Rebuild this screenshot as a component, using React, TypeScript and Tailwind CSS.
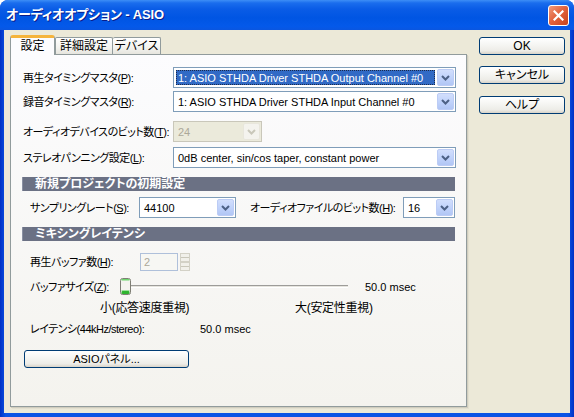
const font = "font-['Liberation_Sans','Noto_Sans_CJK_JP',sans-serif] [font-feature-settings:'palt']";

function Chevron({ disabled }: { disabled?: boolean }) {
  return (
    <svg width="9" height="6" viewBox="0 0 9 6">
      <path d="M1 1L4.5 4.5L8 1" fill="none" stroke={disabled ? "#C9C7BA" : "#4D6185"} strokeWidth="2" />
    </svg>
  );
}

function Combo({ value, w, selected, disabled }: { value: string; w: string; selected?: boolean; disabled?: boolean }) {
  return (
    <div
      className={`flex h-[21px] ${w} shrink-0 items-center border ${
        disabled ? "border-[#C9C7BA] bg-[#EBEADB] text-[#ACA899]" : "border-[#7F9DB9] bg-white text-black"
      }`}
    >
      <div className="flex h-full min-w-0 flex-1 items-center overflow-hidden p-[2px]">
        {selected ? (
          <div className="flex h-full flex-1 items-center border border-dotted border-[#1c2a4a] bg-[#316AC5] pl-[1px] text-white">
            {value}
          </div>
        ) : (
          <span className="pl-[2px]">{value}</span>
        )}
      </div>
      <div
        className={`mr-[1px] flex h-[17px] w-[17px] shrink-0 items-center justify-center rounded-[2px] border ${
          disabled
            ? "border-[#E8E6DC] bg-[#F4F3EE]"
            : "border-[#BCCCF5] bg-[linear-gradient(180deg,#D2DEFC_0%,#C1D3FB_50%,#B1C6F5_100%)]"
        }`}
      >
        <Chevron disabled={disabled} />
      </div>
    </div>
  );
}

function XpButton({ children, className }: { children: React.ReactNode; className?: string }) {
  return (
    <div
      className={`flex shrink-0 items-center justify-center rounded-[3px] border border-[#003C74] bg-[linear-gradient(180deg,#FFFFFF_0%,#F5F5F2_45%,#EDECE7_80%,#D8D3C8_100%)] text-black ${className ?? ""}`}
    >
      {children}
    </div>
  );
}

function SectionBar({ title, className }: { title: string; className?: string }) {
  return (
    <div className={`flex h-[14px] w-[433px] items-center border-l border-[#8A90A2] bg-[#6B7184] pl-[12px] text-[12px] font-bold text-white ${className ?? ""}`}>
      {title}
    </div>
  );
}

function Label({ children, className }: { children: React.ReactNode; className?: string }) {
  return <span className={`shrink-0 tracking-[-0.5px] ${className ?? ""}`}>{children}</span>;
}

function U({ k }: { k: string }) {
  return <span className="underline">{k}</span>;
}

export default function App() {
  return (
    <div className={`${font} flex h-[417px] w-[574px] flex-col overflow-hidden whitespace-nowrap rounded-t-[8px] bg-[#0A48DE] text-[11px] leading-[14px]`}>
      {/* title bar */}
      <div className="flex h-[30px] shrink-0 items-center justify-between bg-[linear-gradient(180deg,#3D8EF6_0%,#1A6DED_10%,#0A5CE6_30%,#0055E3_60%,#0459EA_88%,#0A56E0_100%)] pl-[6px] pr-[5px]">
        <span className="text-[13px] font-bold tracking-[-0.2px] text-white [text-shadow:1px_1px_#0A1C8A]">オーディオオプション - ASIO</span>
        <div className="flex h-[21px] w-[21px] items-center justify-center rounded-[3px] border border-white bg-[linear-gradient(135deg,#F09A7C_0%,#E2643F_45%,#C7421B_100%)]">
          <svg width="11" height="11" viewBox="0 0 11 11">
            <path d="M1.5 1.5L9.5 9.5M9.5 1.5L1.5 9.5" stroke="white" strokeWidth="2.2" strokeLinecap="square" />
          </svg>
        </div>
      </div>

      {/* frame + client */}
      <div className="flex flex-1 bg-[linear-gradient(90deg,#0031C4_0%,#0A53E5_1%,#0A53E5_99%,#0031C4_100%)] px-[4px] pb-[4px]">
        <div className="flex flex-1 bg-[#ECE9D8] pl-[6px] pt-[5px]">
          {/* tab control */}
          <div className="flex w-[457px] flex-col">
            <div className="flex h-[19px] items-end text-[12px]">
              <div className="relative z-10 -mb-[1px] flex h-[20px] w-[45px] items-center justify-center rounded-t-[3px] border-x border-t-[3px] border-x-[#919B9C] border-t-[#F5B43C] bg-[#FCFCFE] pb-[1px] text-black">
                設定
              </div>
              <div className="flex h-[17px] w-[58px] items-center justify-center rounded-t-[2px] border border-b-0 border-[#919B9C] bg-[linear-gradient(180deg,#FFFFFF_0%,#F3F3EF_60%,#E6E5DE_100%)] text-black">
                詳細設定
              </div>
              <div className="flex h-[17px] w-[48px] items-center justify-center rounded-t-[2px] border border-b-0 border-l-0 border-[#919B9C] bg-[linear-gradient(180deg,#FFFFFF_0%,#F3F3EF_60%,#E6E5DE_100%)] text-black">
                デバイス
              </div>
            </div>

            <div className="flex h-[353px] w-[457px] flex-col border border-[#919B9C] bg-[linear-gradient(180deg,#FCFCFE_0%,#F4F3EE_100%)] pl-[11px] text-black shadow-[1px_1px_0_#D0CDBE,2px_2px_0_#E3E0D0]">
              <div className="mt-[12px] flex h-[21px] items-center">
                <Label className="w-[151px] pl-[1px]">
                  再生タイミングマスタ(<U k="P" />):
                </Label>
                <Combo value="1: ASIO STHDA Driver STHDA Output Channel #0" w="w-[283px]" selected />
              </div>
              <div className="mt-[3px] flex h-[21px] items-center">
                <Label className="w-[151px] pl-[1px]">
                  録音タイミングマスタ(<U k="R" />):
                </Label>
                <Combo value="1: ASIO STHDA Driver STHDA Input Channel #0" w="w-[283px]" />
              </div>
              <div className="mt-[9px] flex h-[21px] items-center">
                <Label className="w-[151px] pl-[1px]">
                  オーディオデバイスのビット数(<U k="T" />):
                </Label>
                <Combo value="24" w="w-[89px]" disabled />
              </div>
              <div className="mt-[5px] flex h-[21px] items-center">
                <Label className="w-[151px] pl-[1px]">
                  ステレオパンニング設定(<U k="L" />):
                </Label>
                <Combo value="0dB center, sin/cos taper, constant power" w="w-[283px]" />
              </div>

              <SectionBar title="新規プロジェクトの初期設定" className="mt-[9px]" />

              <div className="mt-[6px] flex h-[21px] items-center pl-[8px]">
                <Label className="w-[109px]">
                  サンプリングレート(<U k="S" />):
                </Label>
                <Combo value="44100" w="w-[97px]" />
                <Label className="ml-[14px] w-[153px]">
                  オーディオファイルのビット数(<U k="H" />):
                </Label>
                <Combo value="16" w="w-[52px]" />
              </div>

              <SectionBar title="ミキシングレイテンシ" className="mt-[9px]" />

              <div className="mt-[12px] flex h-[18px] items-center pl-[8px]">
                <Label className="w-[110px]">
                  再生バッファ数(<U k="H" />):
                </Label>
                <div className="flex h-[18px] w-[38px] items-center border border-[#AFC0DA] bg-[#F7F7F3] pl-[3px] text-[#ACA899]">2</div>
                <svg className="ml-[2px]" width="10" height="18" viewBox="0 0 10 18">
                  <rect x="0.5" y="0.5" width="9" height="8" fill="#F1F0EA" stroke="#D3D1C6" />
                  <rect x="0.5" y="9.5" width="9" height="8" fill="#F1F0EA" stroke="#D3D1C6" />
                  <line x1="1" y1="4.5" x2="9" y2="4.5" stroke="#C9C7BA" />
                  <line x1="1" y1="13.5" x2="9" y2="13.5" stroke="#C9C7BA" />
                </svg>
              </div>

              <div className="mt-[7px] flex h-[17px] items-center pl-[8px]">
                <Label className="w-[90px]">
                  バッファサイズ(<U k="Z" />):
                </Label>
                <div className="relative h-[17px] w-[228px] shrink-0">
                  <div className="absolute left-[4px] right-0 top-[7px] h-[3px] border-t border-[#9D9C99] bg-[#E6E5DE] border-b border-b-white" />
                  <svg className="absolute left-0 top-0" width="11" height="17" viewBox="0 0 11 17">
                    <rect x="0.5" y="0.5" width="10" height="16" rx="2" fill="#F5F4EF" stroke="#7E7E74" />
                    <rect x="1.5" y="1" width="8" height="1.5" fill="#6FD66F" />
                    <rect x="1.5" y="13" width="8" height="3" rx="1" fill="#2FB52F" />
                    <rect x="1.5" y="12" width="8" height="1" fill="#9BE29B" />
                  </svg>
                </div>
                <span className="ml-[17px]">50.0 msec</span>
              </div>

              <div className="mt-[6px] flex h-[14px] items-center pl-[78px] text-[12px]">
                <span className="w-[195px] shrink-0 tracking-[-0.3px]">小(応答速度重視)</span>
                <span className="tracking-[-0.3px]">大(安定性重視)</span>
              </div>

              <div className="mt-[7px] flex h-[14px] items-center pl-[8px]">
                <Label className="w-[170px]">レイテンシ(44kHz/stereo):</Label>
                <span>50.0 msec</span>
              </div>

              <XpButton className="ml-[2px] mt-[14px] h-[18px] w-[165px]">ASIOパネル...</XpButton>
            </div>
          </div>

          {/* right buttons */}
          <div className="ml-[12px] flex flex-col pt-[2px] text-[12px]">
            <XpButton className="h-[18px] w-[86px]">OK</XpButton>
            <XpButton className="mt-[11px] h-[18px] w-[86px]">キャンセル</XpButton>
            <XpButton className="mt-[12px] h-[18px] w-[86px]">ヘルプ</XpButton>
          </div>
        </div>
      </div>
    </div>
  );
}
